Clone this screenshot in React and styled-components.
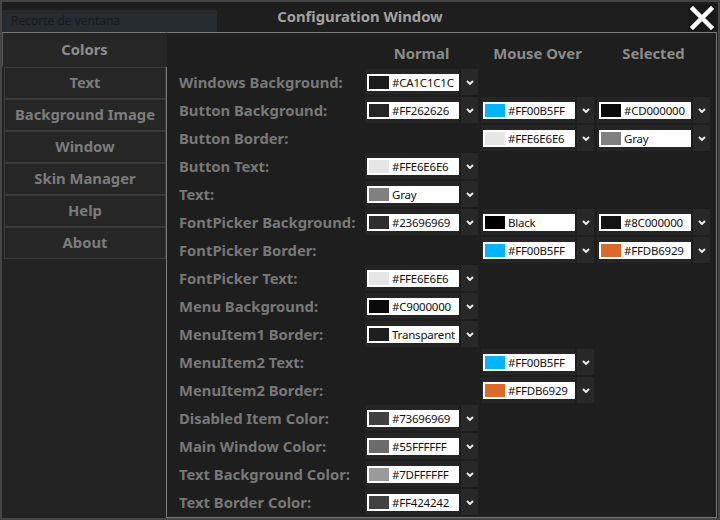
import React from 'react'
import styled, { createGlobalStyle } from 'styled-components'

const GlobalStyle = createGlobalStyle`
  body {
    margin: 0;
    background: #1e1e1e;
    font-family: "Noto Sans", "Open Sans", sans-serif;
  }
`

const Window = styled.div`
  width: 720px;
  height: 520px;
  box-sizing: border-box;
  border: 2px solid #454545;
  background: #1e1e1e;
  display: flex;
  flex-direction: column;
  overflow: hidden;
`
const TitleBar = styled.div`
  height: 30px;
  display: grid;
  grid-template-columns: 1fr auto 1fr;
  align-items: center;
`
const Search = styled.div`
  align-self: end;
  width: 215px;
  height: 22px;
  box-sizing: border-box;
  padding-left: 9px;
  background: #262b30;
  color: #181b1e;
  font-size: 12px;
  line-height: 22px;
`
const Title = styled.div`
  font-weight: 700;
  font-size: 14.8px;
  color: #a2a2a2;
  margin-top: -3px;
`
const Close = styled.div`
  justify-self: end;
  width: 28px;
  height: 27px;
  margin-right: 2px;
  margin-top: 1px;
  background: #191919;
  display: flex;
  align-items: center;
  justify-content: center;
`
const Body = styled.div`
  flex: 1;
  display: flex;
`
const Side = styled.div`
  width: 164px;
  background: #222222;
  display: flex;
  flex-direction: column;
  position: relative;
  z-index: 1;
`
const Tab = styled.div`
  height: ${(p) => (p.$active ? '35px' : '32px')};
  box-sizing: border-box;
  margin-left: ${(p) => (p.$active ? '0' : '2px')};
  margin-right: ${(p) => (p.$active ? '-1px' : '0')};
  padding-bottom: 2px;
  background: #262626;
  border: 1px solid #3b3b3b;
  border-color: ${(p) => (p.$active ? '#7a7a7a #262626 #262626 #555' : '#3b3b3b')};
  display: flex;
  align-items: center;
  justify-content: center;
  font-weight: 700;
  font-size: 14.8px;
  color: ${(p) => (p.$active ? '#8e8e8e' : '#7c7c7c')};
`
const Panel = styled.div`
  flex: 1;
  margin-right: 1px;
  border: 1px solid #7a7a7a;
  padding: 7px 0 0 12px;
  background: #1e1e1e;
`
const Grid = styled.div`
  display: grid;
  grid-template-columns: 183px 113px 113px 113px;
  grid-auto-rows: 28px;
  column-gap: 3px;
  align-items: center;
`
const Head = styled.div`
  text-align: center;
  font-weight: 700;
  font-size: 14.8px;
  color: #8c8c8c;
  margin-top: -2px;
`
const Label = styled.div`
  font-weight: 700;
  font-size: 14.8px;
  color: #787878;
  white-space: nowrap;
`
const Picker = styled.div`
  display: flex;
  height: 26px;
  gap: 2px;
`
const Field = styled.div`
  width: 94px;
  box-sizing: border-box;
  background: #252525;
  display: flex;
  align-items: center;
  padding-left: 2px;
`
const Box = styled.div`
  width: 92px;
  height: 17px;
  background: #ffffff;
  display: flex;
  align-items: center;
  gap: 3px;
  padding-left: 2px;
  box-sizing: border-box;
  overflow: hidden;
`
const Swatch = styled.div`
  width: 20px;
  height: 13px;
  background: ${(p) => p.$c};
  flex-shrink: 0;
`
const Value = styled.span`
  font-size: 11.5px;
  letter-spacing: -0.2px;
  color: #111;
  line-height: 17px;
  white-space: nowrap;
`
const Drop = styled.div`
  width: 17px;
  background: #282828;
  display: flex;
  align-items: center;
  justify-content: center;
`

const Chevron = () => (
  <svg width="8" height="5" viewBox="0 0 8 5">
    <path d="M1 1 L4 4 L7 1" fill="none" stroke="#e8e8e8" strokeWidth="2" />
  </svg>
)

const ColorPicker = ({ c, v, col }) => (
  <Picker style={{ gridColumn: col }}>
    <Field>
      <Box>
        <Swatch $c={c} />
        <Value>{v}</Value>
      </Box>
    </Field>
    <Drop>
      <Chevron />
    </Drop>
  </Picker>
)

const rows = [
  ['Windows Background:', [['#1c1c1c', '#CA1C1C1C'], null, null]],
  ['Button Background:', [['#262626', '#FF262626'], ['#00b5ff', '#FF00B5FF'], ['#0a0a0a', '#CD000000']]],
  ['Button Border:', [null, ['#e6e6e6', '#FFE6E6E6'], ['#808080', 'Gray']]],
  ['Button Text:', [['#e6e6e6', '#FFE6E6E6'], null, null]],
  ['Text:', [['#808080', 'Gray'], null, null]],
  ['FontPicker Background:', [['#2e2e2e', '#23696969'], ['#000000', 'Black'], ['#141414', '#8C000000']]],
  ['FontPicker Border:', [null, ['#00b5ff', '#FF00B5FF'], ['#db6929', '#FFDB6929']]],
  ['FontPicker Text:', [['#e6e6e6', '#FFE6E6E6'], null, null]],
  ['Menu Background:', [['#0a0a0a', '#C9000000'], null, null]],
  ['MenuItem1 Border:', [['#1e1e1e', 'Transparent'], null, null]],
  ['MenuItem2 Text:', [null, ['#00b5ff', '#FF00B5FF'], null]],
  ['MenuItem2 Border:', [null, ['#db6929', '#FFDB6929'], null]],
  ['Disabled Item Color:', [['#404040', '#73696969'], null, null]],
  ['Main Window Color:', [['#6b6b6b', '#55FFFFFF'], null, null]],
  ['Text Background Color:', [['#9a9a9a', '#7DFFFFFF'], null, null]],
  ['Text Border Color:', [['#424242', '#FF424242'], null, null]],
]

const tabs = ['Colors', 'Text', 'Background Image', 'Window', 'Skin Manager', 'Help', 'About']

const App = () => {
  return (
    <Window>
      <GlobalStyle />
      <TitleBar>
        <Search>Recorte de ventana</Search>
        <Title>Configuration Window</Title>
        <Close>
          <svg width="24" height="24" viewBox="0 0 24 24">
            <path d="M3 3 L21 21 M21 3 L3 21" stroke="#ffffff" strokeWidth="4.5" strokeLinecap="square" />
          </svg>
        </Close>
      </TitleBar>
      <Body>
        <Side>
          {tabs.map((t, i) => (
            <Tab key={t} $active={i === 0}>
              {t}
            </Tab>
          ))}
        </Side>
        <Panel>
          <Grid>
            <div />
            <Head>Normal</Head>
            <Head>Mouse Over</Head>
            <Head>Selected</Head>
            {rows.map(([label, cells]) => (
              <React.Fragment key={label}>
                <Label style={{ gridColumn: 1 }}>{label}</Label>
                {cells.map((cell, j) =>
                  cell ? <ColorPicker key={j} c={cell[0]} v={cell[1]} col={j + 2} /> : null
                )}
              </React.Fragment>
            ))}
          </Grid>
        </Panel>
      </Body>
    </Window>
  )
}

export default App
